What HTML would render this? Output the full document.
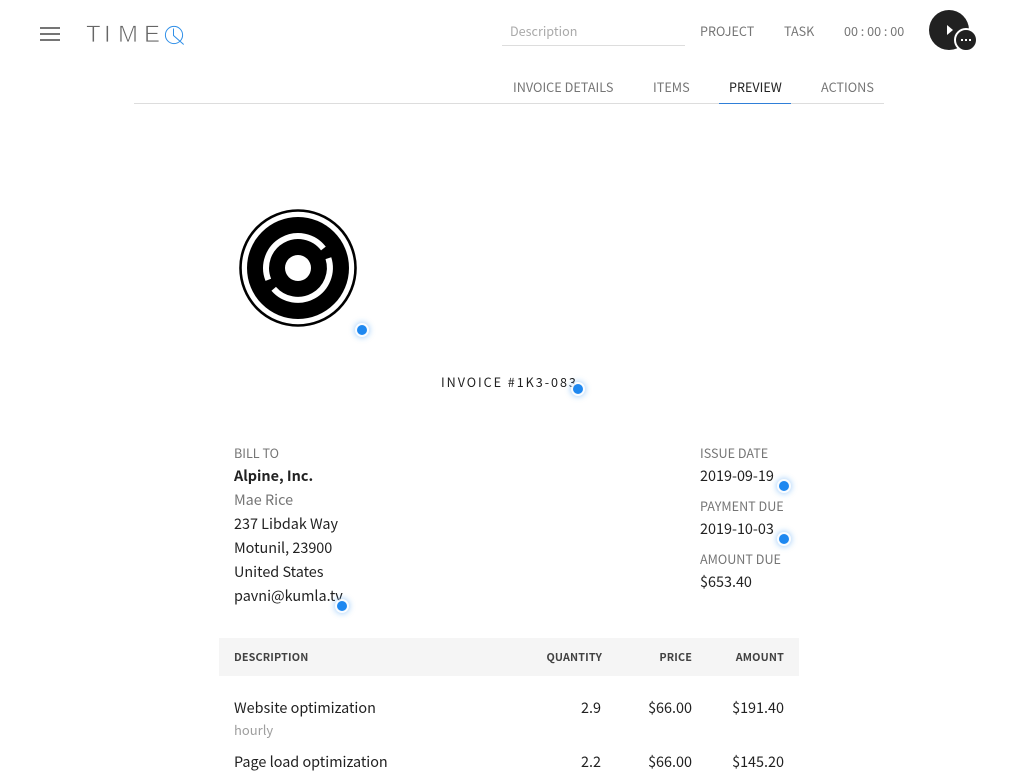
<!DOCTYPE html>
<html><head><meta charset="utf-8"><style>
html,body{margin:0;padding:0;background:#fff}
body{width:1018px;height:768px;overflow:hidden;position:relative;font-family:"Noto Sans CJK JP","Noto Sans CJK SC","Liberation Sans",sans-serif;color:#212121}
.t{position:absolute;white-space:nowrap;line-height:24px;font-size:14.4px}
.s{font-size:12.6px;color:#757575}
.u{font-size:12.7px}
.r{text-align:right}
.h{font-size:10.8px;font-weight:700;color:#424242;letter-spacing:.15px}
.dot{position:absolute;width:10px;height:10px;border-radius:50%;background:#1e88f0;box-shadow:0 0 0 2px rgba(255,255,255,.9),0 0 6px 3px rgba(30,136,240,.35)}
.b{position:absolute}
.l{position:absolute;top:20px;line-height:30px;font-size:24px;font-family:'Liberation Sans',sans-serif;color:#666;-webkit-text-stroke:.7px #fff}
</style></head><body>
<div class="b" style="left:40px;top:27px;width:20px;height:2px;background:#757575"></div>
<div class="b" style="left:40px;top:33px;width:20px;height:2px;background:#757575"></div>
<div class="b" style="left:40px;top:39px;width:20px;height:2px;background:#757575"></div>
<div class="l" style="left:86px">T</div>
<div class="l" style="left:104px">I</div>
<div class="l" style="left:118px">M</div>
<div class="l" style="left:144px">E</div>
<svg class="b" style="left:164px;top:24.5px" width="22" height="22" viewBox="0 0 22 22" fill="none" stroke="#2f8fe8" stroke-width="1"><circle cx="10" cy="10" r="8.6"/><path d="M9.5 3.5V10.5L19.7 19.5"/></svg>
<div class="t" style="left:510px;top:19px;font-size:12.6px;color:#aaa">Description</div>
<div class="b" style="left:502px;top:45px;width:183px;height:1px;background:#ddd"></div>
<div class="t s" style="left:700px;top:19px">PROJECT</div>
<div class="t s" style="left:784px;top:19px">TASK</div>
<div class="t s" style="left:844px;top:19px">00 : 00 : 00</div>
<div class="b" style="left:929px;top:10px;width:40px;height:40px;border-radius:50%;background:#212121"></div>
<div class="b" style="left:947px;top:25px;width:0;height:0;border-left:6px solid #fff;border-top:5px solid transparent;border-bottom:5px solid transparent"></div>
<div class="b" style="left:954px;top:28px;width:20px;height:20px;border-radius:50%;background:#212121;border:2px solid #fff"></div>
<div class="b" style="left:961px;top:39px;width:2px;height:2px;background:#fff;box-shadow:4px 0 #fff,8px 0 #fff"></div>
<div class="t s u" style="left:513px;top:75px">INVOICE DETAILS</div>
<div class="t s u" style="left:653px;top:75px">ITEMS</div>
<div class="t s" style="left:729px;top:75px;color:#212121">PREVIEW</div>
<div class="t s u" style="left:821px;top:75px">ACTIONS</div>
<div class="b" style="left:134px;top:103px;width:750px;height:1px;background:#ddd"></div>
<div class="b" style="left:719px;top:103px;width:72px;height:1px;background:#2f7fd8"></div>
<svg class="b" style="left:238px;top:207.5px" width="120" height="120" viewBox="0 0 120 120">
<circle cx="60" cy="60" r="57.5" fill="#fff" stroke="#000" stroke-width="2.6"/>
<circle cx="60" cy="60" r="51" fill="#000"/>
<circle cx="60" cy="60" r="13" fill="#fff"/>
<g fill="none" stroke="#fff" stroke-width="6">
<path d="M30.3 71.8A32 32 0 0 1 85.4 40.5"/>
<path d="M90.4 50.2A32 32 0 0 1 35.7 80.8"/>
</g></svg>
<div class="dot" style="left:357px;top:325px"></div>
<div class="t" style="left:441px;top:370px;font-size:12.6px;letter-spacing:1.95px;color:#212121">INVOICE #1K3-083</div>
<div class="dot" style="left:573px;top:384px"></div>
<div class="t s" style="left:234px;top:441px">BILL TO</div>
<div class="t" style="left:234px;top:464px;font-weight:700">Alpine, Inc.</div>
<div class="t" style="left:234px;top:488px;color:#757575">Mae Rice</div>
<div class="t" style="left:234px;top:512px">237 Libdak Way</div>
<div class="t" style="left:234px;top:536px">Motunil, 23900</div>
<div class="t" style="left:234px;top:560px">United States</div>
<div class="t" style="left:234px;top:584px">pavni@kumla.tv</div>
<div class="dot" style="left:337px;top:601px"></div>
<div class="t s" style="left:700px;top:441px">ISSUE DATE</div>
<div class="t" style="left:700px;top:464px">2019-09-19</div>
<div class="dot" style="left:779px;top:481px"></div>
<div class="t s" style="left:700px;top:494px">PAYMENT DUE</div>
<div class="t" style="left:700px;top:517px">2019-10-03</div>
<div class="dot" style="left:779px;top:534px"></div>
<div class="t s" style="left:700px;top:547px">AMOUNT DUE</div>
<div class="t" style="left:700px;top:570px">$653.40</div>
<div class="b" style="left:219px;top:638px;width:580px;height:38px;background:#f5f5f5"></div>
<div class="t h" style="left:234px;top:645px">DESCRIPTION</div>
<div class="t h r" style="right:416px;top:645px">QUANTITY</div>
<div class="t h r" style="right:326px;top:645px">PRICE</div>
<div class="t h r" style="right:234px;top:645px">AMOUNT</div>
<div class="t" style="left:234px;top:696px">Website optimization</div>
<div class="t" style="left:234px;top:718px;font-size:13px;color:#9e9e9e">hourly</div>
<div class="t r" style="right:417px;top:696px">2.9</div>
<div class="t r" style="right:326px;top:696px">$66.00</div>
<div class="t r" style="right:234px;top:696px">$191.40</div>
<div class="t" style="left:234px;top:750px">Page load optimization</div>
<div class="t r" style="right:417px;top:750px">2.2</div>
<div class="t r" style="right:326px;top:750px">$66.00</div>
<div class="t r" style="right:234px;top:750px">$145.20</div>
</body></html>
